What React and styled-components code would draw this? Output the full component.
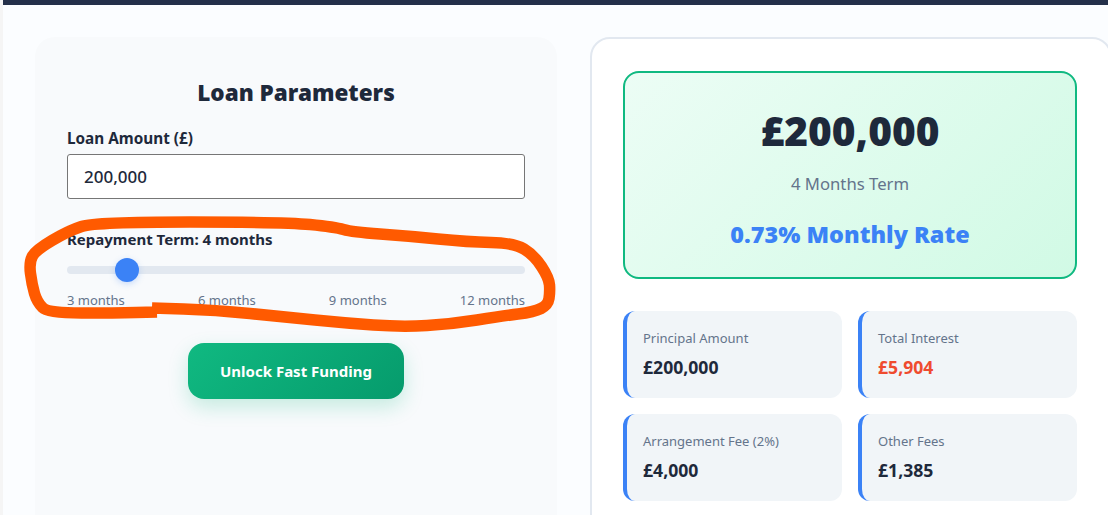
import React, { useState } from "react";
import styled, { createGlobalStyle } from "styled-components";

const GlobalStyle = createGlobalStyle`
  html, body {
    margin: 0;
    height: 100%;
    overflow: hidden;
    background: #f5f5f5;
  }
  body {
    font-family: "Noto Sans", "Open Sans", "Liberation Sans", sans-serif;
    color: #1e293b;
  }
`;

const Page = styled.div`
  position: relative;
  height: 515px;
  margin-left: 3px;
  border-top: 5px solid #24304a;
  box-sizing: border-box;
  background: #fbfdff;
  overflow: hidden;
`;
const Columns = styled.main`
  display: grid;
  grid-template-columns: 522px 522px;
  gap: 33px;
  padding: 32px 0 0 32px;
`;
const ParamsPanel = styled.section`
  height: 520px;
  box-sizing: border-box;
  padding: 40px 32px 32px;
  border-radius: 20px;
  background: #f8fafc;
`;
const PanelTitle = styled.h2`
  margin: 0 0 19px;
  font-size: 22.5px;
  line-height: 32px;
  font-weight: 900;
  text-align: center;
  color: #1e293b;
`;
const Label = styled.label`
  display: block;
  margin-bottom: 6px;
  font-size: ${({ $size }) => $size || "15.3px"};
  line-height: 20px;
  font-weight: 700;
  color: #1e293b;
`;
const AmountInput = styled.input`
  display: block;
  width: 100%;
  height: 45px;
  box-sizing: border-box;
  margin-bottom: 30px;
  padding: 0 16px;
  border: 1px solid #767676;
  border-radius: 3px;
  background: #fff;
  font: 500 17px "Noto Sans", sans-serif;
  color: #1e293b;
`;
const TermSlider = styled.input`
  display: block;
  width: 100%;
  height: 24px;
  margin: 9px 0 0;
  appearance: none;
  background: transparent;
  &::-webkit-slider-runnable-track {
    height: 8px;
    border-radius: 4px;
    background: #e2e8f0;
  }
  &::-webkit-slider-thumb {
    appearance: none;
    width: 24px;
    height: 24px;
    margin-top: -8px;
    border-radius: 50%;
    background: #3b82f6;
    box-shadow: 0 2px 6px rgba(59, 130, 246, 0.25);
  }
`;
const TermScale = styled.div`
  display: flex;
  justify-content: space-between;
  margin-top: 8px;
  font-size: 13px;
  line-height: 20px;
  color: #64748b;
`;
const FundingButton = styled.button`
  display: block;
  width: 216px;
  height: 56px;
  margin: 33px auto 0;
  border: 0;
  border-radius: 16px;
  background: linear-gradient(135deg, #10b981, #069b6c);
  box-shadow: 0 8px 20px rgba(16, 185, 129, 0.22);
  font: 700 15px "Noto Sans", sans-serif;
  color: #fff;
`;
const ResultsPanel = styled.section`
  height: 520px;
  box-sizing: border-box;
  padding: 32px 33px 32px 31px;
  border: 2px solid #e2e8f0;
  border-radius: 20px;
  background: #fff;
`;
const Headline = styled.div`
  height: 208px;
  box-sizing: border-box;
  padding-top: 32px;
  margin-bottom: 32px;
  border: 2px solid #10b981;
  border-radius: 16px;
  background: linear-gradient(135deg, #ecfdf5, #d1fae5);
  text-align: center;
`;
const HeadlineAmount = styled.div`
  font-size: 40.6px;
  line-height: 52px;
  font-weight: 900;
  color: #1e293b;
`;
const HeadlineTerm = styled.div`
  margin-top: 15px;
  font-size: 16.7px;
  line-height: 24px;
  color: #64748b;
`;
const HeadlineRate = styled.div`
  margin-top: 22px;
  font-size: 23.4px;
  line-height: 32px;
  font-weight: 900;
  color: #3b82f6;
`;
const StatGrid = styled.div`
  display: grid;
  grid-template-columns: 1fr 1fr;
  gap: 16px;
`;
const StatCard = styled.div`
  height: 87px;
  box-sizing: border-box;
  padding: 16px;
  border-left: 4px solid #3b82f6;
  border-radius: 12px;
  background: #f1f5f8;
`;
const StatLabel = styled.div`
  font-size: 13px;
  line-height: 22px;
  color: #64748b;
`;
const StatValue = styled.div`
  margin-top: 6px;
  font-size: 17.6px;
  line-height: 24px;
  font-weight: 700;
  color: ${({ $accent }) => $accent || "#1e293b"};
`;
const Scribble = styled.svg`
  position: absolute;
  left: -3px;
  top: -5px;
  pointer-events: none;
`;

const stats = [
  { label: "Principal Amount", value: "£200,000" },
  { label: "Total Interest", value: "£5,904", accent: "#ef4b2f" },
  { label: "Arrangement Fee (2%)", value: "£4,000" },
  { label: "Other Fees", value: "£1,385" },
];

// hand drawn ring round the slider, smoothed through the midpoints
const ringPoints = [
  [152, 308], [215, 310], [285, 317], [345, 323], [402, 327], [452, 324],
  [502, 316], [534, 312], [548, 305], [550, 292], [549, 278], [534, 255],
  [514, 243], [468, 242], [408, 236], [352, 232], [335, 227], [285, 222],
  [95, 222], [68, 231], [36, 250], [29, 262], [32, 285], [37, 302],
  [48, 313], [115, 313], [157, 312],
];
const ringPath = ringPoints.reduce((d, [x, y], i) => {
  if (i === 0) return `M${x} ${y}`;
  const [px, py] = ringPoints[i - 1];
  return i === 1 ? `${d} L${(px + x) / 2} ${(py + y) / 2}` : `${d} Q${px} ${py} ${(px + x) / 2} ${(py + y) / 2}`;
}, "") + " L157 312";

const App = () => {
  const [term, setTerm] = useState(4);
  return (
    <Page>
      <GlobalStyle />
      <Columns>
        <ParamsPanel>
          <PanelTitle>Loan Parameters</PanelTitle>
          <Label htmlFor="amount">Loan Amount (£)</Label>
          <AmountInput id="amount" defaultValue="200,000" />
          <Label htmlFor="term" $size="15px">Repayment Term: {term} months</Label>
          <TermSlider
            id="term"
            type="range"
            min="3"
            max="12"
            value={term}
            onChange={(e) => setTerm(Number(e.target.value))}
          />
          <TermScale>
            <span>3 months</span>
            <span>6 months</span>
            <span>9 months</span>
            <span>12 months</span>
          </TermScale>
          <FundingButton>Unlock Fast Funding</FundingButton>
        </ParamsPanel>
        <ResultsPanel>
          <Headline>
            <HeadlineAmount>£200,000</HeadlineAmount>
            <HeadlineTerm>{term} Months Term</HeadlineTerm>
            <HeadlineRate>0.73% Monthly Rate</HeadlineRate>
          </Headline>
          <StatGrid>
            {stats.map((s) => (
              <StatCard key={s.label}>
                <StatLabel>{s.label}</StatLabel>
                <StatValue $accent={s.accent}>{s.value}</StatValue>
              </StatCard>
            ))}
          </StatGrid>
        </ResultsPanel>
      </Columns>
      <Scribble width="1108" height="515" viewBox="0 0 1108 515" fill="none">
        <path d={ringPath} stroke="#ff5a00" strokeWidth="11.5" strokeLinejoin="round" />
      </Scribble>
    </Page>
  );
};

export default App;
